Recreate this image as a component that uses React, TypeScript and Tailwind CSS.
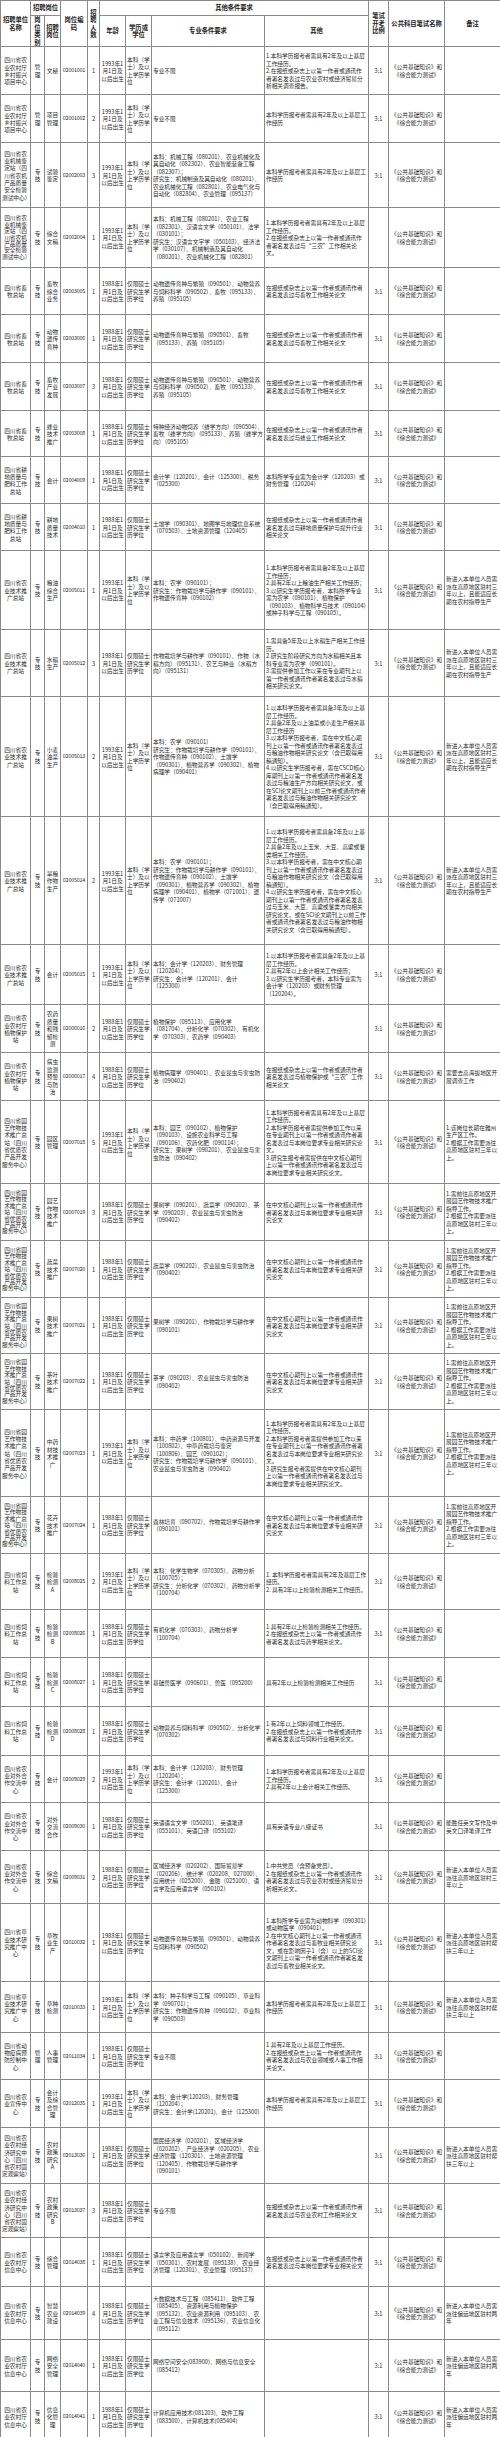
import React from 'react';

type Row = {
    unit: string;
    type: string;
    post: string;
    code: string;
    num: string;
    age: string;
    edu: string;
    prof: string;
    other: string;
    ratio: string;
    remark: string;
    h: string;
    tight?: boolean;
};

const AGE93 = '1993年1月1日及以后出生';
const AGE88 = '1988年1月1日及以后出生';
const BK = '本科（学士）及以上学历学位';
const SS = '仅限硕士研究生学历学位';
const EXAM = '《公共基础知识》和《综合能力测试》';

const U1 = '四川省农业农村厅乡村振兴项目中心';
const U2 = '四川省农业机械鉴定站（四川省农机产品质量安全检验测试中心）';
const U3 = '四川省畜牧总站';
const U4 = '四川省耕地质量与肥料工作总站';
const U5 = '四川省农业技术推广总站';
const U6 = '四川省农业农村厅植物保护站';
const U7 = '四川省园艺作物技术推广总站（四川省优质农产品开发服务中心）';
const U8 = '四川省饲料工作总站';
const U9 = '四川省农业对外合作交流中心';
const U10 = '四川省草业技术研究推广中心';
const U11 = '四川省动物疫病预防控制中心';
const U12 = '四川省农业宣传中心';
const U13 = '四川省农业农村经济研究中心（四川省农村固定观察站）';
const U14 = '四川省农业农村厅信息中心';

const R_PLATEAU = '新进入本单位人员需派在高原地区驻村三年以上，且能适应长期在农村指导生产';
const R_HORT = '1.需前往高原地区开展园艺作物技术推广指导工作。\n2.根据工作需要派往高原地区驻村三年以上。';
const R_GRASS = '新进入本单位人员需派往高原地区驻村帮扶三年以上';
const R_INFO = '新进入本单位人员需派往偏远地区驻村两年';

const O_XM = '在报纸或杂志上以第一作者或通讯作者署名发表过与畜牧工作相关论文';
const O_HORT = '在中文核心期刊上以第一作者或通讯作者署名发表过与本岗位要求专业相关研究论文';
const O_HORT_BK =
    '1.本科学历报考者需具有2年及以上基层工作经历。\n2.本科学历报考者需提供参加工作以来在专业期刊上以第一作者或通讯作者署名发表过与本岗位要求专业相关研究论文。\n3.研究生报考者需提供在中文核心期刊上以第一作者或通讯作者署名发表过与本岗位要求专业相关研究论文。';
const O_BASE = '本科学历报考者需具有2年及以上基层工作经历';

const rows: Row[] = [
    { unit: U1, type: '管理', post: '文秘', code: '02001001', num: '1', age: AGE93, edu: BK, prof: '专业不限', other: '1.本科学历报考者需具有2年及以上基层工作经历。\n2.在报纸或杂志上以第一作者或通讯作者署名发表过与农业农村或经济贸易分析相关调查报告。', ratio: '3:1', remark: '', h: 'h-[48px]' },
    { unit: U1, type: '管理', post: '项目管理', code: '02001002', num: '2', age: AGE93, edu: BK, prof: '专业不限', other: O_BASE, ratio: '3:1', remark: '', h: 'h-[48px]' },
    { unit: U2, type: '专技', post: '试验鉴定', code: '02002003', num: '3', age: AGE93, edu: BK, prof: '本科：机械工程（080201）、农业机械化及其自动化（082302）、农业智能装备工程（082307）；\n研究生：机械制造及其自动化（080201）、农业机械化工程（082801）、农业电气化与自动化（082804）、农业管理（095137）', other: O_BASE, ratio: '3:1', remark: '', h: 'h-[65px]' },
    { unit: U2, type: '专技', post: '综合文稿', code: '02002004', num: '1', age: AGE93, edu: BK, prof: '本科：机械工程（080201）、农业工程（082301）、汉语言文学（050101）、法学（030101）；\n研究生：汉语言文字学（050103）、经济法学（030107）、机械制造及其自动化（080201）、农业机械化工程（082801）', other: '1.本科学历报考者需具有2年及以上基层工作经历。\n2.在报纸或杂志上以第一作者或通讯作者署名发表过与“三农”工作相关论文。', ratio: '', remark: '', h: 'h-[60px]', tight: true },
    { unit: U3, type: '专技', post: '畜牧综合业务', code: '02003005', num: '1', age: AGE88, edu: SS, prof: '动物遗传育种与繁殖（090501）、动物营养与饲料科学（090502）、畜牧（095133）、养殖（095105）', other: O_XM, ratio: '3:1', remark: '', h: 'h-[47px]' },
    { unit: U3, type: '专技', post: '动物遗传育种', code: '02003006', num: '1', age: AGE88, edu: SS, prof: '动物遗传育种与繁殖（090501）、畜牧（095133）、养殖（095105）', other: O_XM, ratio: '3:1', remark: '', h: 'h-[48px]' },
    { unit: U3, type: '专技', post: '畜牧产业发展', code: '02003007', num: '3', age: AGE88, edu: SS, prof: '动物遗传育种与繁殖（090501）、动物营养与饲料科学（090502）、畜牧（095133）、养殖（095105）', other: O_XM, ratio: '3:1', remark: '', h: 'h-[48px]' },
    { unit: U3, type: '专技', post: '蜂业技术推广', code: '02003008', num: '1', age: AGE88, edu: SS, prof: '特种经济动物饲养（蜂学方向）（090504）、畜牧（蜂学方向）（095133）、养殖（蜂学方向）（095105）', other: '在报纸或杂志上以第一作者或通讯作者署名发表过与蜂业工作相关论文', ratio: '3:1', remark: '', h: 'h-[46px]' },
    { unit: U4, type: '专技', post: '会计', code: '02004009', num: '1', age: AGE88, edu: SS, prof: '会计学（120201）、会计（125300）、税务（025300）', other: '本科所学专业需为会计学（120203）或财务管理（120204）', ratio: '3:1', remark: '', h: 'h-[47px]' },
    { unit: U4, type: '专技', post: '耕地质量技术', code: '02004010', num: '1', age: AGE88, edu: SS, prof: '土壤学（090301）、地图学与地理信息系统（070503）、土地资源管理（120405）', other: '在报纸或杂志上以第一作者或通讯作者署名发表过与耕地质量保护与提升行业相关论文', ratio: '3:1', remark: '', h: 'h-[47px]' },
    { unit: U5, type: '专技', post: '粮油综合生产', code: '02005011', num: '1', age: AGE93, edu: BK, prof: '本科：农学（090101）；\n研究生：作物栽培学与耕作学（090101）、作物遗传育种（090102）', other: '1.本科学历报考者需具备2年及以上基层工作经历；\n2.具有2年以上粮油生产相关工作经历；\n3.以研究生学历报考者，本科所学专业需为农学（090101）、植物保护（090103）、植物科学与技术（090104）或种子科学与工程（090105）。', ratio: '3:1', remark: R_PLATEAU, h: 'h-[79px]' },
    { unit: U5, type: '专技', post: '水稻生产', code: '02005012', num: '3', age: AGE88, edu: SS, prof: '作物栽培学与耕作学（090101）、作物（水稻方向）（095131）、农艺与种业（水稻方向）（095131）', other: '1.需具备5年及以上水稻生产相关工作经历。\n2.研究生阶段研究方向为水稻相关且本科专业需为农学（090101）。\n3.需提供参加工作以来在专业期刊上以第一作者或通讯作者署名发表过与水稻相关研究论文。', ratio: '3:1', remark: R_PLATEAU, h: 'h-[67px]' },
    { unit: U5, type: '专技', post: '小麦油菜生产', code: '02005013', num: '2', age: AGE93, edu: BK, prof: '本科：农学（090101）\n研究生：作物栽培学与耕作学（090101）、作物遗传育种（090102）、土壤学（090301）、植物营养学（090302）、植物病理学（090401）', other: '1.以本科学历报考者需具备3年及以上基层工作经历。\n2.具备2年及以上油菜或小麦生产相关基层工作经历\n3.以本科学历报考者，需在中文核心期刊上以第一作者或通讯作者署名发表过与粮油作物相关研究论文（含已取得用稿通知）。\n4.以研究生学历报考者，需在CSCD核心库期刊上以第一作者或通讯作者署名发表过与粮油生产方向相关研究论文，或在SCI论文期刊上以前三作者或通讯作者署名发表过与粮油作物相关研究论文（含已取得用稿通知）。', ratio: '3:1', remark: R_PLATEAU, h: 'h-[120px]' },
    { unit: U5, type: '专技', post: '旱粮作物生产', code: '02005014', num: '2', age: AGE93, edu: BK, prof: '本科：农学（090101）；\n研究生：作物栽培学与耕作学（090101）、作物遗传育种（090102）、土壤学（090301）、植物营养学（090302）、植物病理学（090401）、植物学（071001）、遗传学（071007）', other: '1.以本科学历报考者需具备2年及以上基层工作经历。\n2.具备2年及以上玉米、大豆、高粱或薯类相关工作经历。\n3.以本科学历报考者，需在中文核心期刊上以第一作者或通讯作者署名发表过与粮油作物相关研究论文（含已取得用稿通知）。\n4.以研究生学历报考者，需在中文核心期刊上以第一作者或通讯作者署名发表过与玉米、大豆、高粱或薯类方向相关研究论文，或在SCI论文期刊上以前三作者或通讯作者署名发表过与粮油作物相关研究论文（含已取得用稿通知）。', ratio: '3:1', remark: R_PLATEAU, h: 'h-[128px]' },
    { unit: U5, type: '专技', post: '会计', code: '02005015', num: '1', age: AGE93, edu: BK, prof: '本科：会计学（120203）、财务管理（120204）；\n研究生：会计学（120201）、会计（125300）', other: '1.以本科学历报考者需具备2年及以上基层工作经历。\n2.具有2年以上会计相关工作经历；\n3.以研究生学历报考者，本科专业需为会计学（120203）或财务管理（120204）。', ratio: '3:1', remark: '', h: 'h-[60px]' },
    { unit: U6, type: '专技', post: '农药质量和残留检测', code: '02006016', num: '2', age: AGE88, edu: SS, prof: '植物保护（095113）、应用化学（081704）、分析化学（070302）、有机化学（070303）、农药学（090403）', other: '', ratio: '3:1', remark: '', h: 'h-[48px]' },
    { unit: U6, type: '专技', post: '病虫监测预警与防治', code: '02006017', num: '4', age: AGE88, edu: SS, prof: '植物病理学（090401）、农业昆虫与害虫防治（090402）', other: '在报纸或杂志上以第一作者或通讯作者署名发表过与植物保护或“三农”工作相关论文', ratio: '3:1', remark: '需要去高海拔地区开展调查工作', h: 'h-[48px]' },
    { unit: U7, type: '专技', post: '园区管理', code: '02007018', num: '5', age: AGE93, edu: BK, prof: '本科：园艺（090102）、植物保护（090103）、设施农业科学与工程（090106）、农药化肥（090114）；\n研究生：果树学（090201）、农业昆虫与害虫防治（090402）', other: O_HORT_BK, ratio: '3:1', remark: '1.该岗位长期在雅州生产区工作。\n2.根据工作需要派往高原地区驻村三年以上。', h: 'h-[83px]' },
    { unit: U7, type: '专技', post: '园艺作物技术推广', code: '02007019', num: '3', age: AGE88, edu: SS, prof: '果树学（090201）、蔬菜学（090202）、茶学（090203）、农业昆虫与害虫防治（090402）', other: O_HORT, ratio: '3:1', remark: R_HORT, h: 'h-[57px]', tight: true },
    { unit: U7, type: '专技', post: '蔬菜技术推广', code: '02007020', num: '1', age: AGE88, edu: SS, prof: '蔬菜学（090202）、农业昆虫与害虫防治（090402）', other: O_HORT, ratio: '3:1', remark: R_HORT, h: 'h-[57px]', tight: true },
    { unit: U7, type: '专技', post: '果树技术推广', code: '02007021', num: '1', age: AGE88, edu: SS, prof: '果树学（090201）、作物栽培学与耕作学（090101）', other: O_HORT, ratio: '3:1', remark: R_HORT, h: 'h-[56px]', tight: true },
    { unit: U7, type: '专技', post: '茶叶技术推广', code: '02007022', num: '1', age: AGE88, edu: SS, prof: '茶学（090203）、农业昆虫与害虫防治（090402）', other: O_HORT, ratio: '3:1', remark: R_HORT, h: 'h-[56px]', tight: true },
    { unit: U7, type: '专技', post: '中药材技术推广', code: '02007023', num: '1', age: AGE93, edu: BK, prof: '本科：中药学（100801）、中药资源与开发（100802）、中草药栽培与鉴定（100806）、园艺（090102）；\n研究生：作物栽培学与耕作学（090101）、农业昆虫与害虫防治（090402）', other: O_HORT_BK, ratio: '3:1', remark: R_HORT, h: 'h-[87px]' },
    { unit: U7, type: '专技', post: '花卉技术推广', code: '02007024', num: '1', age: AGE88, edu: SS, prof: '森林培育（090702）、作物栽培学与耕作学（090101）', other: O_HORT, ratio: '3:1', remark: R_HORT, h: 'h-[57px]', tight: true },
    { unit: U8, type: '专技', post: '检验检测A', code: '02008025', num: '2', age: AGE93, edu: BK, prof: '本科：化学生物学（070305）、药物分析（100705）；\n研究生：分析化学（070302）、药物分析学（100704）', other: '1. 本科学历报考者需具有2年及基层工作经历。\n2. 具有2年以上检验检测相关工作经历。', ratio: '3:1', remark: '', h: 'h-[56px]' },
    { unit: U8, type: '专技', post: '检验检测B', code: '02008026', num: '1', age: AGE88, edu: SS, prof: '有机化学（070303）、药物分析学（100704）', other: '1.具有2年以上检验检测相关工作经历。\n2.在报纸或杂志上以第一作者或通讯作者署名发表过与药学相关论文。', ratio: '3:1', remark: '', h: 'h-[48px]' },
    { unit: U8, type: '专技', post: '检验检测C', code: '02008027', num: '1', age: AGE88, edu: SS, prof: '基础兽医学（090601）、兽医（095200）', other: '具有2年以上检验检测相关工作经历', ratio: '3:1', remark: '', h: 'h-[49px]' },
    { unit: U8, type: '专技', post: '检验检测D', code: '02008028', num: '1', age: AGE88, edu: SS, prof: '动物营养与饲料科学（090502）、分析化学（070302）', other: '1.有2年以上饲料领域工作经历。\n2.在报纸或杂志上以第一作者或通讯作者署名发表过与饲料行业相关论文。', ratio: '3:1', remark: '', h: 'h-[49px]' },
    { unit: U9, type: '专技', post: '会计', code: '02009029', num: '2', age: AGE93, edu: BK, prof: '本科：会计学（120203）、财务管理（120204）；\n研究生：会计学（120201）、会计（125300）', other: '1.本科学历报考者需具有2年及以上基层工作经历。\n2.具有2年以上会计相关工作经历。', ratio: '3:1', remark: '', h: 'h-[47px]' },
    { unit: U9, type: '专技', post: '对外交流合作', code: '02009030', num: '1', age: AGE88, edu: SS, prof: '英语语言文学（050201）、英语笔译（055101）、英语口译（055102）', other: '具有英语专业八级证书', ratio: '3:1', remark: '能胜任英文写作及中英文口译笔译工作', h: 'h-[48px]' },
    { unit: U9, type: '专技', post: '综合文稿', code: '02009031', num: '2', age: AGE88, edu: SS, prof: '区域经济学（020202）、国际贸易学（020206）、统计学（020208、027000）、应用统计（025200）、金融（025100）、语言学及应用语言学（050102）', other: '1.中共党员（含预备党员）。\n2.在报纸或杂志上以第一作者或通讯作者署名发表过与农业农村或经济贸易分析相关论文。', ratio: '3:1', remark: '新进入本单位人员需派往高原地区驻村三年以上', h: 'h-[53px]' },
    { unit: U10, type: '专技', post: '草牧业生产', code: '02010032', num: '1', age: AGE88, edu: SS, prof: '动物遗传育种与繁殖（090501）、动物营养与饲料科学（090502）', other: '1.本科所学专业需为动物科学（090301）或动物医学（090401）。\n2.在中文核心期刊上以第一作者或通讯作者署名发表过与畜牧业相关研究论文，或在影响因子1（含）以上的SCI论文期刊上以第一作者或通讯作者署名发表过与畜牧业相关论文。', ratio: '3:1', remark: R_GRASS, h: 'h-[78px]' },
    { unit: U10, type: '专技', post: '草种检测', code: '02010033', num: '1', age: AGE93, edu: BK, prof: '本科：种子科学与工程（090105）、草业科学（090701）；\n研究生：作物遗传育种（090102）、草业科学（090503）', other: O_BASE, ratio: '3:1', remark: R_GRASS, h: 'h-[51px]' },
    { unit: U11, type: '管理', post: '人事管理', code: '02011034', num: '1', age: AGE88, edu: SS, prof: '专业不限', other: '1.具有2年及以上基层工作经历。\n2.在报纸或杂志上以第一作者或通讯作者署名发表过与农业领域或人事工作相关论文。', ratio: '3:1', remark: '', h: 'h-[47px]' },
    { unit: U12, type: '专技', post: '会计及综合管理', code: '02012035', num: '1', age: AGE93, edu: BK, prof: '本科：会计学(120203)、财务管理（120204）；\n研究生：会计学(120201)、会计（125300）', other: O_BASE, ratio: '3:1', remark: '', h: 'h-[48px]' },
    { unit: U13, type: '专技', post: '农村政策研究A', code: '02013036', num: '1', age: AGE88, edu: SS, prof: '国民经济学（020201）、区域经济学（020202）、产业经济学（020205）、农业经济管理（120301）、土地资源管理（120405）、作物栽培学与耕作学（090101）', other: '', ratio: '3:1', remark: R_GRASS, h: 'h-[56px]' },
    { unit: U13, type: '专技', post: '农村政策研究B', code: '02013037', num: '3', age: AGE88, edu: SS, prof: '专业不限', other: '在报纸或杂志上以第一作者或通讯作者署名发表过与农业农村工作相关论文', ratio: '3:1', remark: '', h: 'h-[54px]' },
    { unit: U14, type: '专技', post: '综合管理', code: '02014038', num: '1', age: AGE88, edu: SS, prof: '语言学及应用语言学（050102）、新闻学（050301）、农村发展（095138）、农业经济管理（120301）、农业管理（095137）', other: '在报纸或杂志上以第一作者或通讯作者署名发表过与本岗位要求专业相关论文', ratio: '3:1', remark: '', h: 'h-[49px]' },
    { unit: U14, type: '专技', post: '智慧农业建设', code: '02014039', num: '4', age: AGE88, edu: SS, prof: '大数据技术与工程（085411）、软件工程（085405）、资源利用与植物保护（095132）、农业资源利用（095103）、农业工程与信息技术（095136）、农业信息化（095112）', other: '', ratio: '3:1', remark: R_INFO, h: 'h-[53px]' },
    { unit: U14, type: '专技', post: '网络安全管理', code: '02014040', num: '1', age: AGE88, edu: SS, prof: '网络空间安全(083900)、网络与信息安全（085412）', other: '', ratio: '3:1', remark: R_INFO, h: 'h-[52px]' },
    { unit: U14, type: '专技', post: '信息化管理', code: '02014041', num: '1', age: AGE88, edu: SS, prof: '计算机应用技术(081203)、软件工程（083500）、计算机技术(085404)', other: '', ratio: '3:1', remark: R_INFO, h: 'h-[50px]' },
];

const th = 'border border-[#8a8a8a] px-[1px] py-0 text-center align-middle font-bold text-[6.3px] leading-[7.6px] text-[#222]';
const td = 'border border-[#8a8a8a] px-[1px] py-0 align-middle whitespace-pre-line';

export default function App() {
    return (
        <div className="w-[500px] bg-white" style={{ fontFamily: '"Noto Sans CJK SC", "Liberation Serif", serif' }}>
            <table className="w-[500px] table-fixed border-collapse text-[5.7px] leading-[7.5px] text-[#2a2a2a]">
                <colgroup>
                    <col className="w-[30px]" />
                    <col className="w-[14px]" />
                    <col className="w-[16px]" />
                    <col className="w-[27px]" />
                    <col className="w-[12px]" />
                    <col className="w-[26px]" />
                    <col className="w-[26px]" />
                    <col className="w-[113px]" />
                    <col className="w-[104px]" />
                    <col className="w-[20px]" />
                    <col className="w-[56px]" />
                    <col className="w-[56px]" />
                </colgroup>
                <thead>
                    <tr className="h-[15px]">
                        <th rowSpan={2} className={th}>招聘单位名称</th>
                        <th colSpan={2} className={th}>招聘岗位</th>
                        <th rowSpan={2} className={th}>岗位编码</th>
                        <th rowSpan={2} className={th}>招聘人数</th>
                        <th colSpan={4} className={th}>其他条件要求</th>
                        <th rowSpan={2} className={th}>笔试开考比例</th>
                        <th rowSpan={2} className={th}>公共科目笔试名称</th>
                        <th rowSpan={2} className={th}>备注</th>
                    </tr>
                    <tr className="h-[26px]">
                        <th className={th}>岗位类别</th>
                        <th className={th}>招聘岗位</th>
                        <th className={th}>年龄</th>
                        <th className={th}>学历或学位</th>
                        <th className={th}>专业条件要求</th>
                        <th className={th}>其他</th>
                    </tr>
                </thead>
                <tbody>
                    {rows.map((r) => (
                        <tr key={r.code} className={r.h}>
                            <td className={`${td} text-center ${r.tight ? 'leading-[6.4px]' : 'leading-[7.3px]'}`}>{r.unit}</td>
                            <td className={`${td} text-center`}>{r.type}</td>
                            <td className={`${td} text-center`}>{r.post}</td>
                            <td className={`${td} text-center tracking-[-0.2px] text-[5.4px]`}>{r.code}</td>
                            <td className={`${td} text-center`}>{r.num}</td>
                            <td className={`${td} text-center`}>{r.age}</td>
                            <td className={`${td} text-left`}>{r.edu}</td>
                            <td className={`${td} text-left`}>{r.prof}</td>
                            <td className={`${td} text-left`}>{r.other}</td>
                            <td className={`${td} text-center`}>{r.ratio}</td>
                            <td className={`${td} text-center`}>{EXAM}</td>
                            <td className={`${td} text-left`}>{r.remark}</td>
                        </tr>
                    ))}
                </tbody>
            </table>
        </div>
    );
}
